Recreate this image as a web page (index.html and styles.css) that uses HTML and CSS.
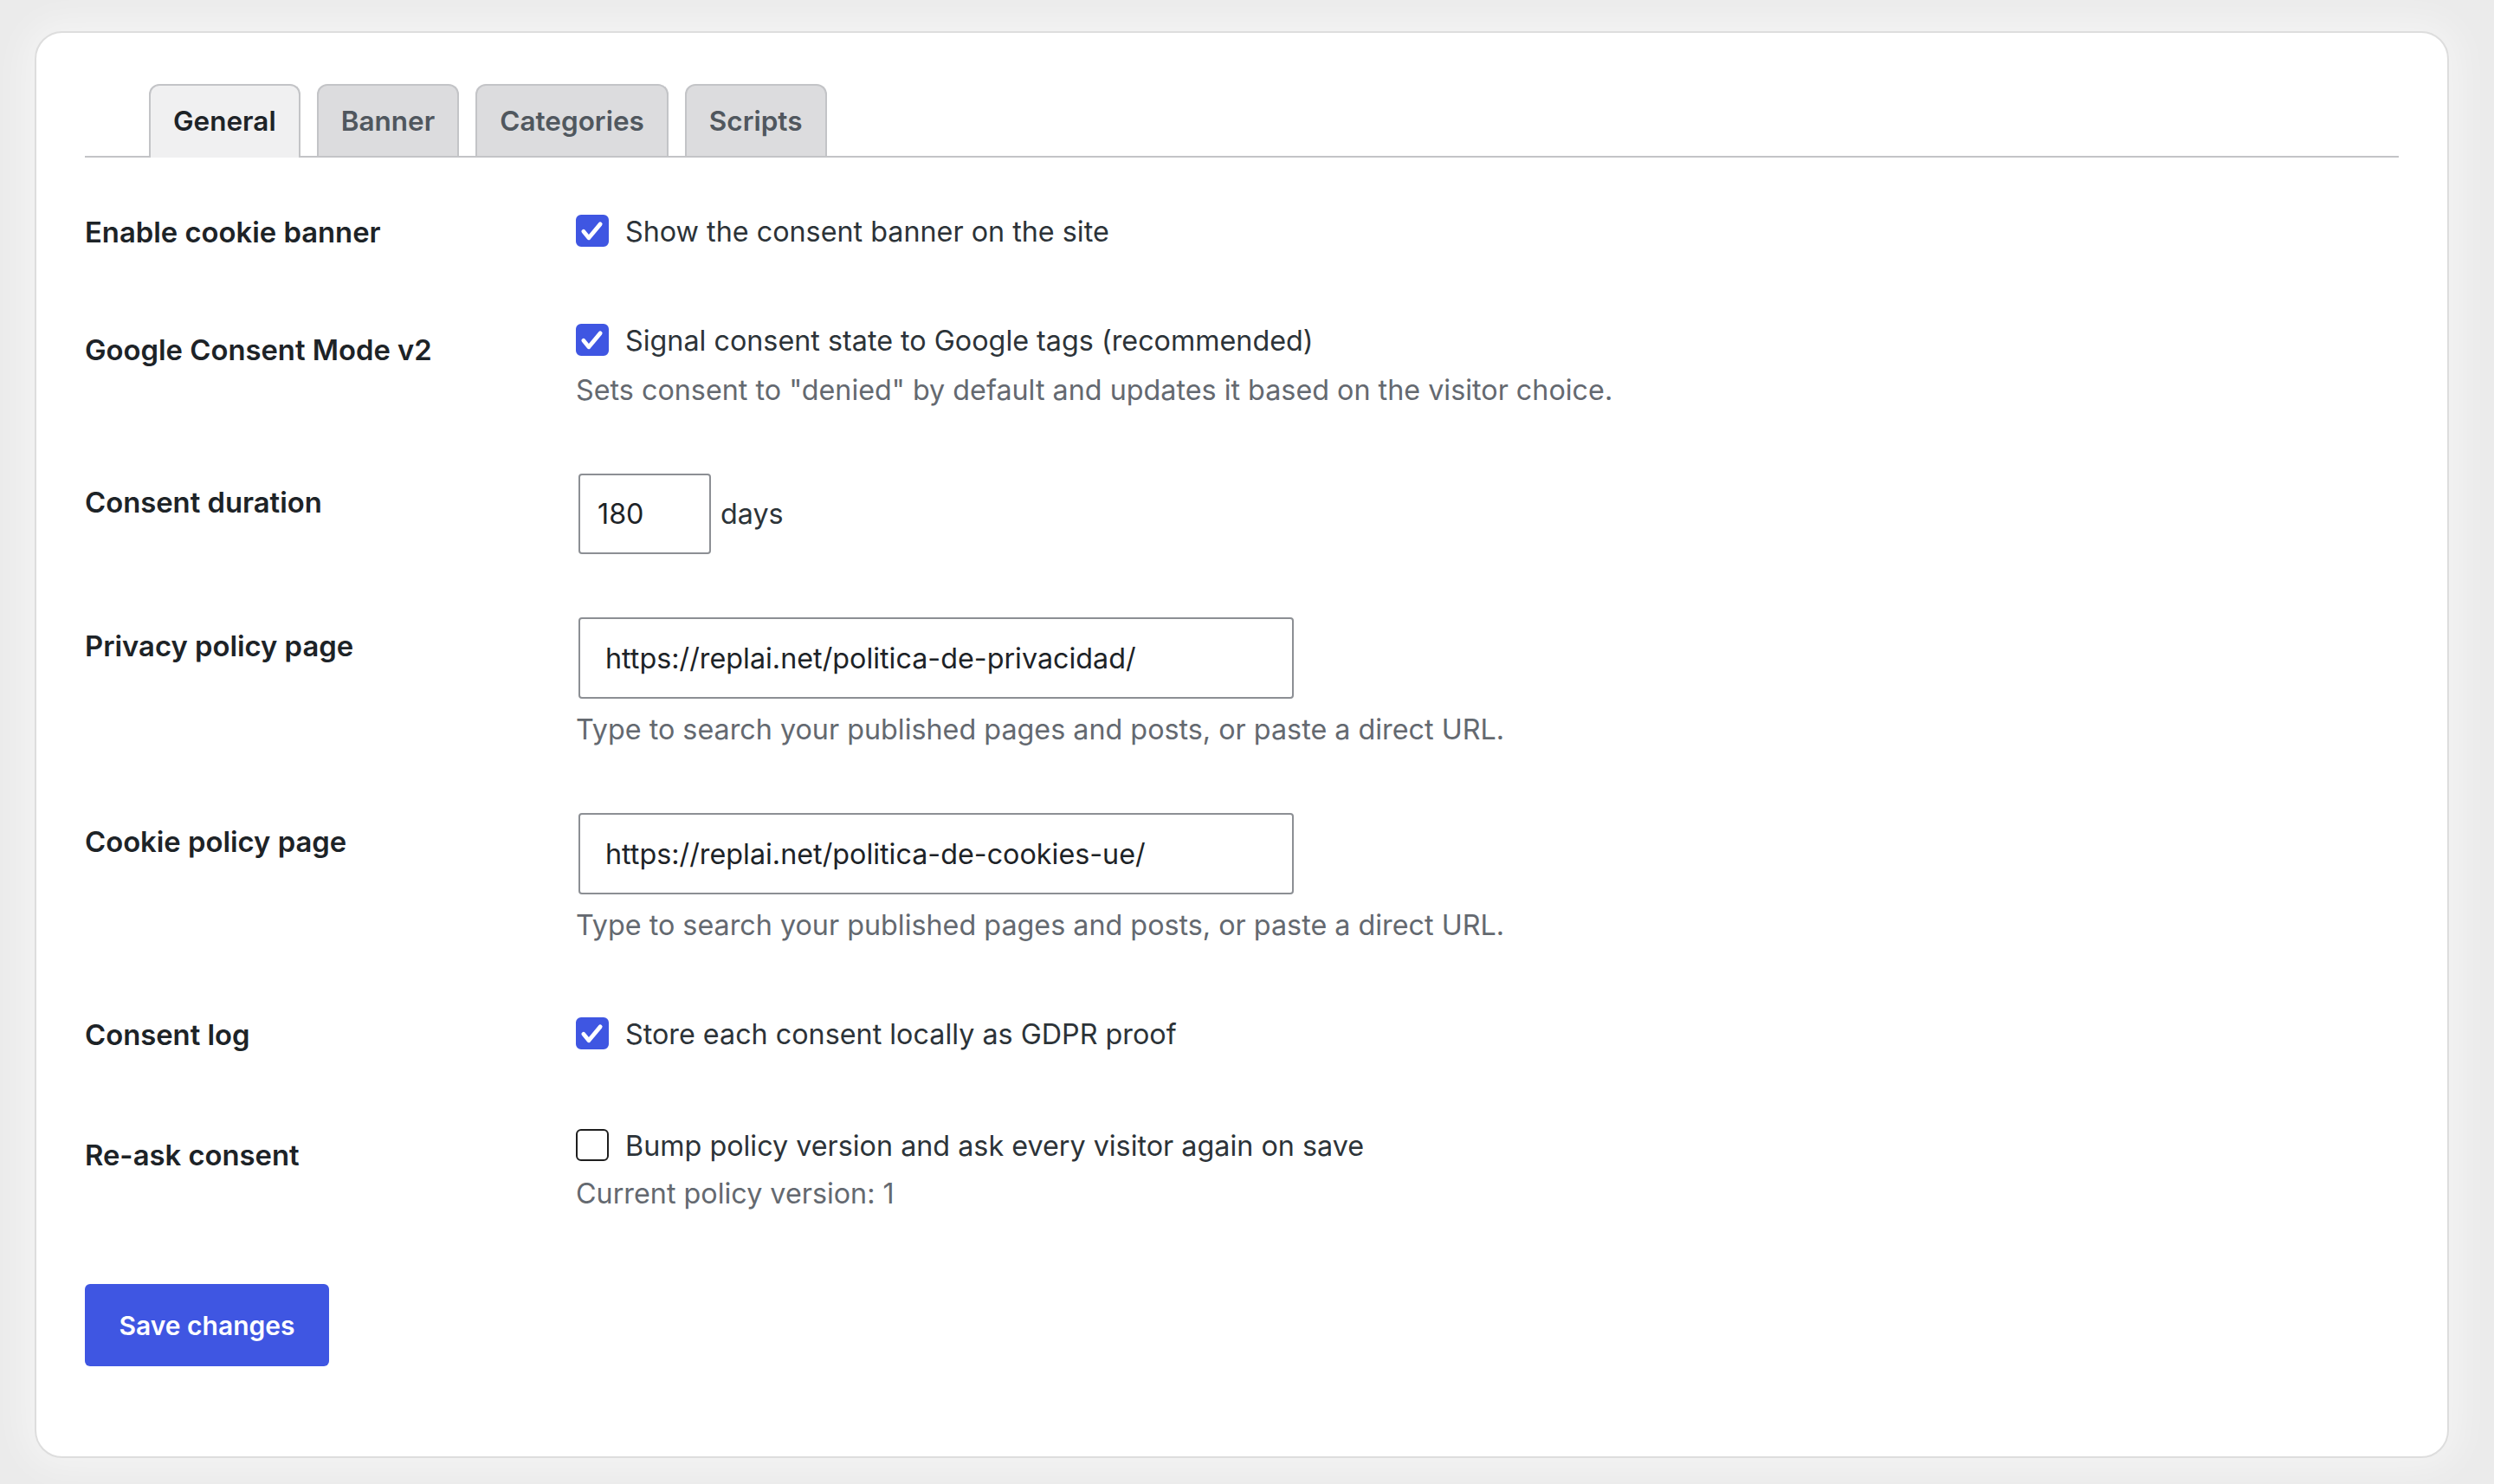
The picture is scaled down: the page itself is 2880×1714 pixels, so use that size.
FILE: index.html
```html
<!DOCTYPE html>
<html lang="en">
<head>
<meta charset="utf-8">
<title>Cookie consent settings</title>
<link rel="stylesheet" href="styles.css">
</head>
<body>
<div class="card">
  <nav class="tabs">
    <a class="tab tab--active">General</a>
    <a class="tab">Banner</a>
    <a class="tab">Categories</a>
    <a class="tab">Scripts</a>
  </nav>

  <form class="form">
    <div class="row row--first">
      <div class="label">Enable cookie banner</div>
      <div class="field">
        <label class="check-line"><span class="checkbox is-checked"><svg viewBox="0 0 20 20"><path d="M4 10.8 L7.6 15.2 L15.4 5.8"/></svg></span>Show the consent banner on the site</label>
      </div>
    </div>

    <div class="row row--desc">
      <div class="label label--offset">Google Consent Mode v2</div>
      <div class="field">
        <label class="check-line"><span class="checkbox is-checked"><svg viewBox="0 0 20 20"><path d="M4 10.8 L7.6 15.2 L15.4 5.8"/></svg></span>Signal consent state to Google tags (recommended)</label>
        <p class="desc">Sets consent to "denied" by default and updates it based on the visitor choice.</p>
      </div>
    </div>

    <div class="row row--input">
      <div class="label label--offset">Consent duration</div>
      <div class="field field--inline">
        <span class="input input--number">180</span>
        <span class="suffix">days</span>
      </div>
    </div>

    <div class="row row--input">
      <div class="label label--offset">Privacy policy page</div>
      <div class="field">
        <span class="input input--url">https://replai.net/politica-de-privacidad/</span>
        <p class="desc desc--after-input">Type to search your published pages and posts, or paste a direct URL.</p>
      </div>
    </div>

    <div class="row row--input">
      <div class="label label--offset">Cookie policy page</div>
      <div class="field">
        <span class="input input--url">https://replai.net/politica-de-cookies-ue/</span>
        <p class="desc desc--after-input">Type to search your published pages and posts, or paste a direct URL.</p>
      </div>
    </div>

    <div class="row row--check">
      <div class="label">Consent log</div>
      <div class="field">
        <label class="check-line"><span class="checkbox is-checked"><svg viewBox="0 0 20 20"><path d="M4 10.8 L7.6 15.2 L15.4 5.8"/></svg></span>Store each consent locally as GDPR proof</label>
      </div>
    </div>

    <div class="row row--desc row--last">
      <div class="label label--offset">Re-ask consent</div>
      <div class="field">
        <label class="check-line"><span class="checkbox"></span>Bump policy version and ask every visitor again on save</label>
        <p class="desc desc--tight">Current policy version: 1</p>
      </div>
    </div>

    <div class="actions">
      <button type="button" class="button-primary">Save changes</button>
    </div>
  </form>
</div>
</body>
</html>
```

FILE: styles.css
```css
html, body {
  margin: 0;
  padding: 0;
}

body {
  background: #ebebeb;
  font-family: Inter, "Noto Sans", "Liberation Sans", sans-serif;
  font-size: 32.3px;
  color: #2c3338;
  width: 2880px;
  height: 1714px;
  overflow: hidden;
  padding-top: 36px;
  box-sizing: border-box;
}

.card {
  margin-left: 40px;
  width: 2788px;
  box-sizing: border-box;
  background: #ffffff;
  border: 2px solid #dddddd;
  border-radius: 32px;
  padding: 59px 56px 104px 56px;
  box-shadow: 0 0 40px 12px rgba(255, 255, 255, 0.45);
}

/* Tabs */
.tabs {
  display: flex;
  align-items: flex-start;
  gap: 19px;
  padding-left: 74px;
  border-bottom: 2px solid #c3c4c7;
  height: 83px;
}

.tab {
  display: flex;
  align-items: center;
  justify-content: center;
  box-sizing: border-box;
  height: 83px;
  padding: 0 26px 0 26px;
  border: 2px solid #c3c4c7;
  border-bottom: none;
  border-radius: 12px 12px 0 0;
  background: #dcdcde;
  color: #50575e;
  font-weight: 600;
  font-size: 31.5px;
  text-decoration: none;
  white-space: nowrap;
}

.tab--active {
  height: 85px;
  padding-bottom: 2px;
  background: #f0f0f1;
  color: #1d2327;
  position: relative;
  z-index: 1;
}

/* Form rows */
.form {
  display: flex;
  flex-direction: column;
}

.row {
  display: grid;
  grid-template-columns: 567px 1fr;
  align-items: start;
}

.row--first { margin-top: 63px; }
.row--desc { margin-top: 80px; }
.row--input { margin-top: 73px; }
.row--check { margin-top: 80px; }
.row--last { margin-top: 83px; }

.label {
  font-weight: 600;
  font-size: 32.8px;
  color: #1d2327;
  line-height: 46px;
  white-space: nowrap;
}

.label--offset { padding-top: 10px; }

.field {
  display: flex;
  flex-direction: column;
  align-items: flex-start;
}

.field--inline {
  flex-direction: row;
  align-items: center;
  gap: 11px;
}

.check-line {
  display: flex;
  align-items: center;
  gap: 19px;
  line-height: 46px;
  color: #2c3338;
  white-space: nowrap;
}

.checkbox {
  width: 38px;
  height: 37px;
  box-sizing: border-box;
  border: 2.5px solid #1e1e1e;
  border-radius: 6px;
  background: #ffffff;
  margin-top: -4px;
  flex: none;
  display: flex;
  align-items: center;
  justify-content: center;
}

.checkbox.is-checked {
  background: #3f56e2;
  border-color: #3f56e2;
}

.checkbox svg {
  width: 34px;
  height: 34px;
  fill: none;
  stroke: #ffffff;
  stroke-width: 2.8;
  stroke-linecap: round;
  stroke-linejoin: round;
}

.desc {
  margin: 11px 0 0 0;
  line-height: 46px;
  color: #646970;
  white-space: nowrap;
}

.desc--after-input { margin-top: 13px; }
.desc--tight { margin-top: 9px; }

.input {
  display: flex;
  align-items: center;
  box-sizing: border-box;
  margin-left: 3px;
  border: 2px solid #8c8f94;
  border-radius: 4px;
  background: #ffffff;
  color: #1d2327;
  white-space: nowrap;
}

.input--number {
  width: 153px;
  height: 93px;
  padding: 0 20px;
}

.input--url {
  width: 826px;
  height: 94px;
  padding: 0 29px;
}

.suffix {
  color: #2c3338;
}

/* Actions */
.actions {
  margin-top: 81px;
}

.button-primary {
  display: block;
  width: 282px;
  height: 95px;
  border: none;
  border-radius: 6px;
  background: #3f56e2;
  color: #ffffff;
  font-family: Inter, "Noto Sans", "Liberation Sans", sans-serif;
  font-size: 30px;
  font-weight: 600;
  padding: 0;
  cursor: pointer;
}
```
